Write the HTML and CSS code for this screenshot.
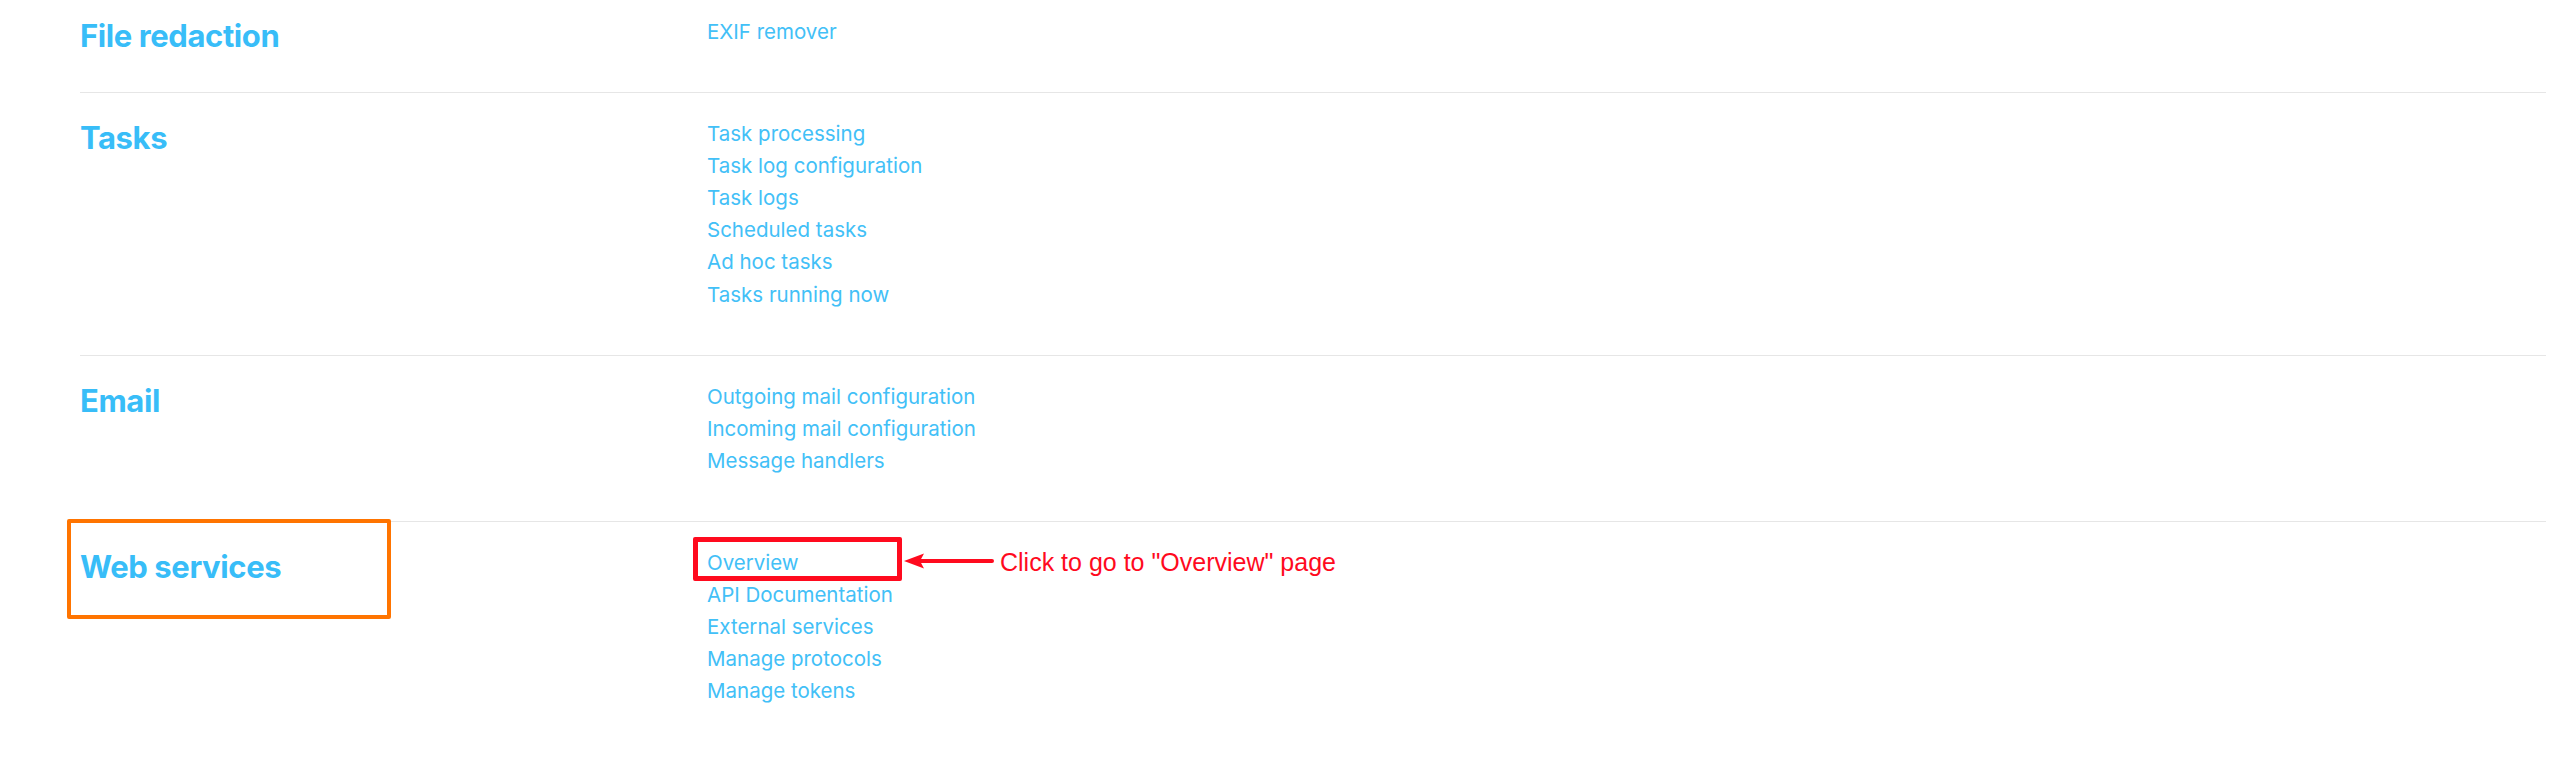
FILE: index.html
```html
<!DOCTYPE html>
<html lang="en">
<head>
<meta charset="utf-8">
<title>Site administration</title>
<link rel="stylesheet" href="styles.css">
</head>
<body>
<main class="admin">
  <section class="cat cat-first">
    <h2 class="cat-title">File redaction</h2>
    <ul class="links">
      <li><a href="#">EXIF remover</a></li>
    </ul>
  </section>
  <section class="cat">
    <h2 class="cat-title">Tasks</h2>
    <ul class="links">
      <li><a href="#">Task processing</a></li>
      <li><a href="#">Task log configuration</a></li>
      <li><a href="#">Task logs</a></li>
      <li><a href="#">Scheduled tasks</a></li>
      <li><a href="#">Ad hoc tasks</a></li>
      <li><a href="#">Tasks running now</a></li>
    </ul>
  </section>
  <section class="cat">
    <h2 class="cat-title">Email</h2>
    <ul class="links">
      <li><a href="#">Outgoing mail configuration</a></li>
      <li><a href="#">Incoming mail configuration</a></li>
      <li><a href="#">Message handlers</a></li>
    </ul>
  </section>
  <section class="cat cat-last">
    <h2 class="cat-title">Web services</h2>
    <ul class="links">
      <li><a href="#">Overview</a></li>
      <li><a href="#">API Documentation</a></li>
      <li><a href="#">External services</a></li>
      <li><a href="#">Manage protocols</a></li>
      <li><a href="#">Manage tokens</a></li>
    </ul>
    <div class="mark mark-orange"></div>
    <div class="mark mark-red"></div>
    <svg class="arrow" width="92" height="20" viewBox="0 0 92 20" aria-hidden="true">
      <line x1="16" y1="10" x2="89" y2="10" stroke="#ff0a1e" stroke-width="4" stroke-linecap="round"/>
      <path d="M1 10 L21 2.5 L17 10 L21 17.5 Z" fill="#ff0a1e"/>
    </svg>
    <p class="note">Click to go to "Overview" page</p>
  </section>
</main>
</body>
</html>
```

FILE: styles.css
```css
html, body {
  margin: 0;
  padding: 0;
  background: #ffffff;
}

body {
  font-family: Inter, "Noto Sans", sans-serif;
}

.admin {
  padding: 0 14px 0 80px;
}

.cat {
  display: grid;
  grid-template-columns: 627px 1fr;
  align-items: start;
  padding: 25px 0 44px;
  border-bottom: 1px solid #e6e6e6;
  position: relative;
}

.cat-first {
  padding-top: 16px;
}

.cat-last {
  border-bottom: none;
}

.cat-title {
  margin: 4px 0 -4px;
  font-size: 31px;
  line-height: 32px;
  font-weight: 700;
  color: #38bdf8;
  letter-spacing: -0.4px;
}

.links {
  list-style: none;
  margin: 0;
  padding: 0;
}

.links li {
  font-size: 20.5px;
  line-height: 32.1px;
}

.links a {
  color: #42c0f7;
  text-decoration: none;
}

.mark {
  position: absolute;
  box-sizing: border-box;
  border-radius: 2px;
}

.mark-orange {
  left: -13px;
  top: -3px;
  width: 324px;
  height: 100px;
  border: 4px solid #ff7400;
}

.mark-red {
  left: 613px;
  top: 15px;
  width: 209px;
  height: 44px;
  border: 5px solid #ff0a1e;
}

.arrow {
  position: absolute;
  left: 823px;
  top: 29px;
}

.note {
  position: absolute;
  left: 920px;
  top: 26px;
  margin: 0;
  font-family: "Liberation Sans", Arial, sans-serif;
  font-size: 25px;
  line-height: 28px;
  color: #ff0a1e;
  white-space: nowrap;
}
```
